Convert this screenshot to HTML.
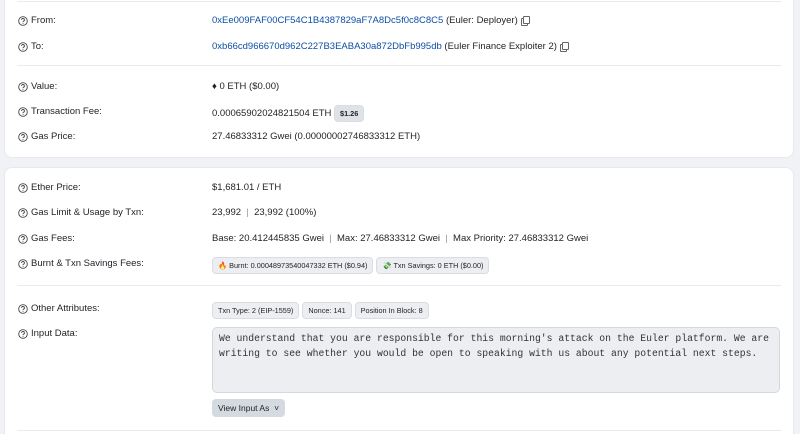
<!DOCTYPE html>
<html><head><style>
*{box-sizing:border-box;margin:0;padding:0}
html,body{width:800px;height:434px;overflow:hidden}
body{background:#f1f2f5;font-family:"Liberation Sans",sans-serif;font-size:9.5px;color:#212529;position:relative}
.card{position:absolute;left:4px;width:790px;background:#fff;border:1px solid #e7e9ee;border-radius:8px}
.hr{position:absolute;left:17px;width:764px;height:1px;background:#e9ecef}
.row{position:absolute;left:0;width:800px;height:14px;line-height:14px}
.lab{position:absolute;left:18px;color:#212529;display:flex;align-items:center;height:14px}
.lab svg{margin-right:3px}
.val{position:absolute;left:212px;white-space:nowrap}
a{color:#0d4ea6;text-decoration:none}
.badge{display:inline-block;background:#eceef1;border:1px solid #d9dde2;border-radius:4px;font-size:7.3px;padding:0 5px;height:17px;line-height:15px;vertical-align:middle;margin-right:3px}
.cp{display:inline-block;width:7px;height:8px;border:1px solid #666;border-radius:1px;margin-left:5px;vertical-align:-1px;box-shadow:-2px 2px 0 -1px #fff,-2px 2px 0 0 #666}
</style></head><body>
<svg width="0" height="0" style="position:absolute"><defs><symbol id="q" viewBox="0 0 10 10"><circle cx="5" cy="5" r="4.3" fill="none" stroke="#444" stroke-width="0.9"/><path d="M3.6 3.9a1.4 1.4 0 1 1 1.9 1.3c-.4.2-.5.4-.5.9" fill="none" stroke="#444" stroke-width="0.9"/><circle cx="5" cy="7.4" r="0.5" fill="#444"/></symbol></defs></svg>
<div class="card" style="top:-10px;height:168px"></div>
<div class="card" style="top:167px;height:280px"></div>
<div class="hr" style="top:1px"></div>
<div class="hr" style="top:65px"></div>
<div class="hr" style="top:285px"></div>
<div class="hr" style="top:430px"></div>

<div class="row" style="top:14px"><span class="lab"><svg width="10" height="10"><use href="#q"/></svg>From:</span><span class="val"><a>0xEe009FAF00CF54C1B4387829aF7A8Dc5f0c8C8C5</a> (Euler: Deployer)<span class="cp"></span></span></div>
<div class="row" style="top:40px"><span class="lab"><svg width="10" height="10"><use href="#q"/></svg>To:</span><span class="val"><a>0xb66cd966670d962C227B3EABA30a872DbFb995db</a> (Euler Finance Exploiter 2)<span class="cp"></span></span></div>
<div class="row" style="top:80px"><span class="lab"><svg width="10" height="10"><use href="#q"/></svg>Value:</span><span class="val">♦ 0 ETH ($0.00)</span></div>
<div class="row" style="top:105px"><span class="lab"><svg width="10" height="10"><use href="#q"/></svg>Transaction Fee:</span><span class="val">0.00065902024821504 ETH <span class="badge" style="background:#dfe2e6;font-weight:bold">$1.26</span></span></div>
<div class="row" style="top:130px"><span class="lab"><svg width="10" height="10"><use href="#q"/></svg>Gas Price:</span><span class="val">27.46833312 Gwei (0.00000002746833312 ETH)</span></div>

<div class="row" style="top:181px"><span class="lab"><svg width="10" height="10"><use href="#q"/></svg>Ether Price:</span><span class="val">$1,681.01 / ETH</span></div>
<div class="row" style="top:206px"><span class="lab"><svg width="10" height="10"><use href="#q"/></svg>Gas Limit &amp; Usage by Txn:</span><span class="val">23,992 &nbsp;<span style="color:#999">|</span>&nbsp; 23,992 (100%)</span></div>
<div class="row" style="top:232px"><span class="lab"><svg width="10" height="10"><use href="#q"/></svg>Gas Fees:</span><span class="val">Base: 20.412445835 Gwei &nbsp;<span style="color:#999">|</span>&nbsp; Max: 27.46833312 Gwei &nbsp;<span style="color:#999">|</span>&nbsp; Max Priority: 27.46833312 Gwei</span></div>
<div class="row" style="top:257px"><span class="lab"><svg width="10" height="10"><use href="#q"/></svg>Burnt &amp; Txn Savings Fees:</span><span class="val"><span class="badge"><span style="color:#e8501a">🔥</span> Burnt: 0.00048973540047332 ETH ($0.94)</span><span class="badge">💸 Txn Savings: 0 ETH ($0.00)</span></span></div>
<div class="row" style="top:302px"><span class="lab"><svg width="10" height="10"><use href="#q"/></svg>Other Attributes:</span><span class="val"><span class="badge">Txn Type: 2 (EIP-1559)</span><span class="badge">Nonce: 141</span><span class="badge">Position In Block: 8</span></span></div>
<div class="row" style="top:327px"><span class="lab"><svg width="10" height="10"><use href="#q"/></svg>Input Data:</span></div>
<div style="position:absolute;left:212px;top:327px;width:568px;height:66px;background:#eceef1;border:1px solid #d5d9de;border-radius:5px;font-family:'Liberation Mono',monospace;font-size:9.75px;line-height:14.5px;padding:4px 6px;color:#333;white-space:pre;overflow:hidden">We understand that you are responsible for this morning's attack on the Euler platform. We are
writing to see whether you would be open to speaking with us about any potential next steps.</div>
<div style="position:absolute;left:212px;top:399px;width:73px;height:18px;background:#d5d9e0;border-radius:4px;font-size:8.5px;line-height:18px;padding-left:6px">View Input As &nbsp;˅</div>
</body></html>
